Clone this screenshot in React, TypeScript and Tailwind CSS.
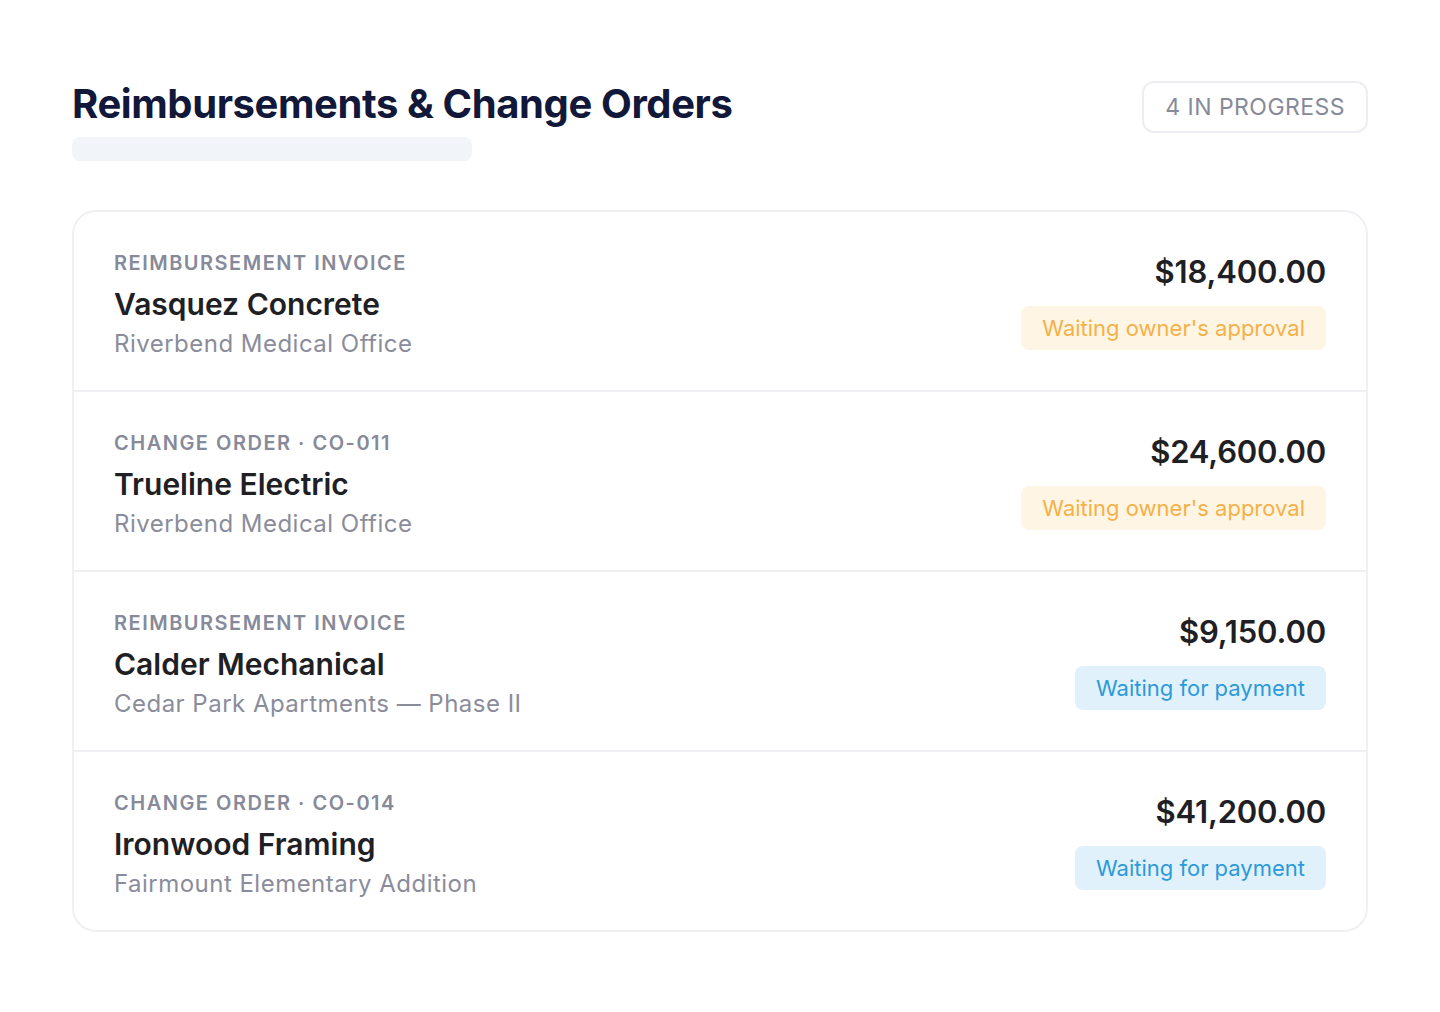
const items = [
    {
        kind: "REIMBURSEMENT INVOICE",
        vendor: "Vasquez Concrete",
        project: "Riverbend Medical Office",
        amount: "$18,400.00",
        status: "approval",
    },
    {
        kind: "CHANGE ORDER · CO-011",
        vendor: "Trueline Electric",
        project: "Riverbend Medical Office",
        amount: "$24,600.00",
        status: "approval",
    },
    {
        kind: "REIMBURSEMENT INVOICE",
        vendor: "Calder Mechanical",
        project: "Cedar Park Apartments — Phase II",
        amount: "$9,150.00",
        status: "payment",
    },
    {
        kind: "CHANGE ORDER · CO-014",
        vendor: "Ironwood Framing",
        project: "Fairmount Elementary Addition",
        amount: "$41,200.00",
        status: "payment",
    },
];

const StatusPill = ({ status }: { status: string }) => {
    if (status === "approval") {
        return (
            <span className="rounded-lg bg-[#fff5e5] px-[21px] py-2 text-[22px] leading-[28px] text-[#f5b147]">
                Waiting owner's approval
            </span>
        );
    }
    return (
        <span className="rounded-lg bg-[#e1f1fb] px-[21px] py-2 text-[22px] leading-[28px] text-[#2c9ad9]">
            Waiting for payment
        </span>
    );
};

const App = () => {
    return (
        <div className="min-h-screen bg-white px-[72px] pt-[80px] font-['Inter','Liberation_Sans',sans-serif]">
            <div className="flex items-start justify-between">
                <div>
                    <h1 className="text-[40px] font-bold leading-[48px] tracking-[-0.01em] text-[#12183a]">
                        Reimbursements &amp; Change Orders
                    </h1>
                    <div className="mt-[9px] h-6 w-[400px] rounded-lg bg-[#f1f4f8]" />
                </div>
                <div className="mt-px rounded-xl border-2 border-[#eceef2] px-[21px] py-[10px] text-[23px] leading-[28px] tracking-[0.02em] text-[#878a99]">
                    4 IN PROGRESS
                </div>
            </div>

            <div className="mt-[49px] overflow-hidden rounded-3xl border-2 border-[#eef0f3]">
                {items.map((item, index) => (
                    <div
                        key={index}
                        className="flex items-start justify-between border-[#eef0f3] px-10 pt-[39px] pb-[30px] [&:not(:first-child)]:border-t-2"
                    >
                        <div>
                            <div className="text-[20px] font-semibold leading-[24px] tracking-[0.075em] text-[#878a99]">
                                {item.kind}
                            </div>
                            <div className="mt-[9px] text-[30px] font-semibold leading-[40px] text-[#1e2024]">
                                {item.vendor}
                            </div>
                            <div className="mt-1 text-[24px] leading-[32px] tracking-[0.02em] text-[#8b8c9b]">
                                {item.project}
                            </div>
                        </div>
                        <div className="flex flex-col items-end">
                            <div className="mt-px text-[31px] font-semibold leading-[40px] tracking-[-0.005em] text-[#1e2024]">
                                {item.amount}
                            </div>
                            <div className="mt-[14px] flex">
                                <StatusPill status={item.status} />
                            </div>
                        </div>
                    </div>
                ))}
            </div>
        </div>
    );
};

export default App;
